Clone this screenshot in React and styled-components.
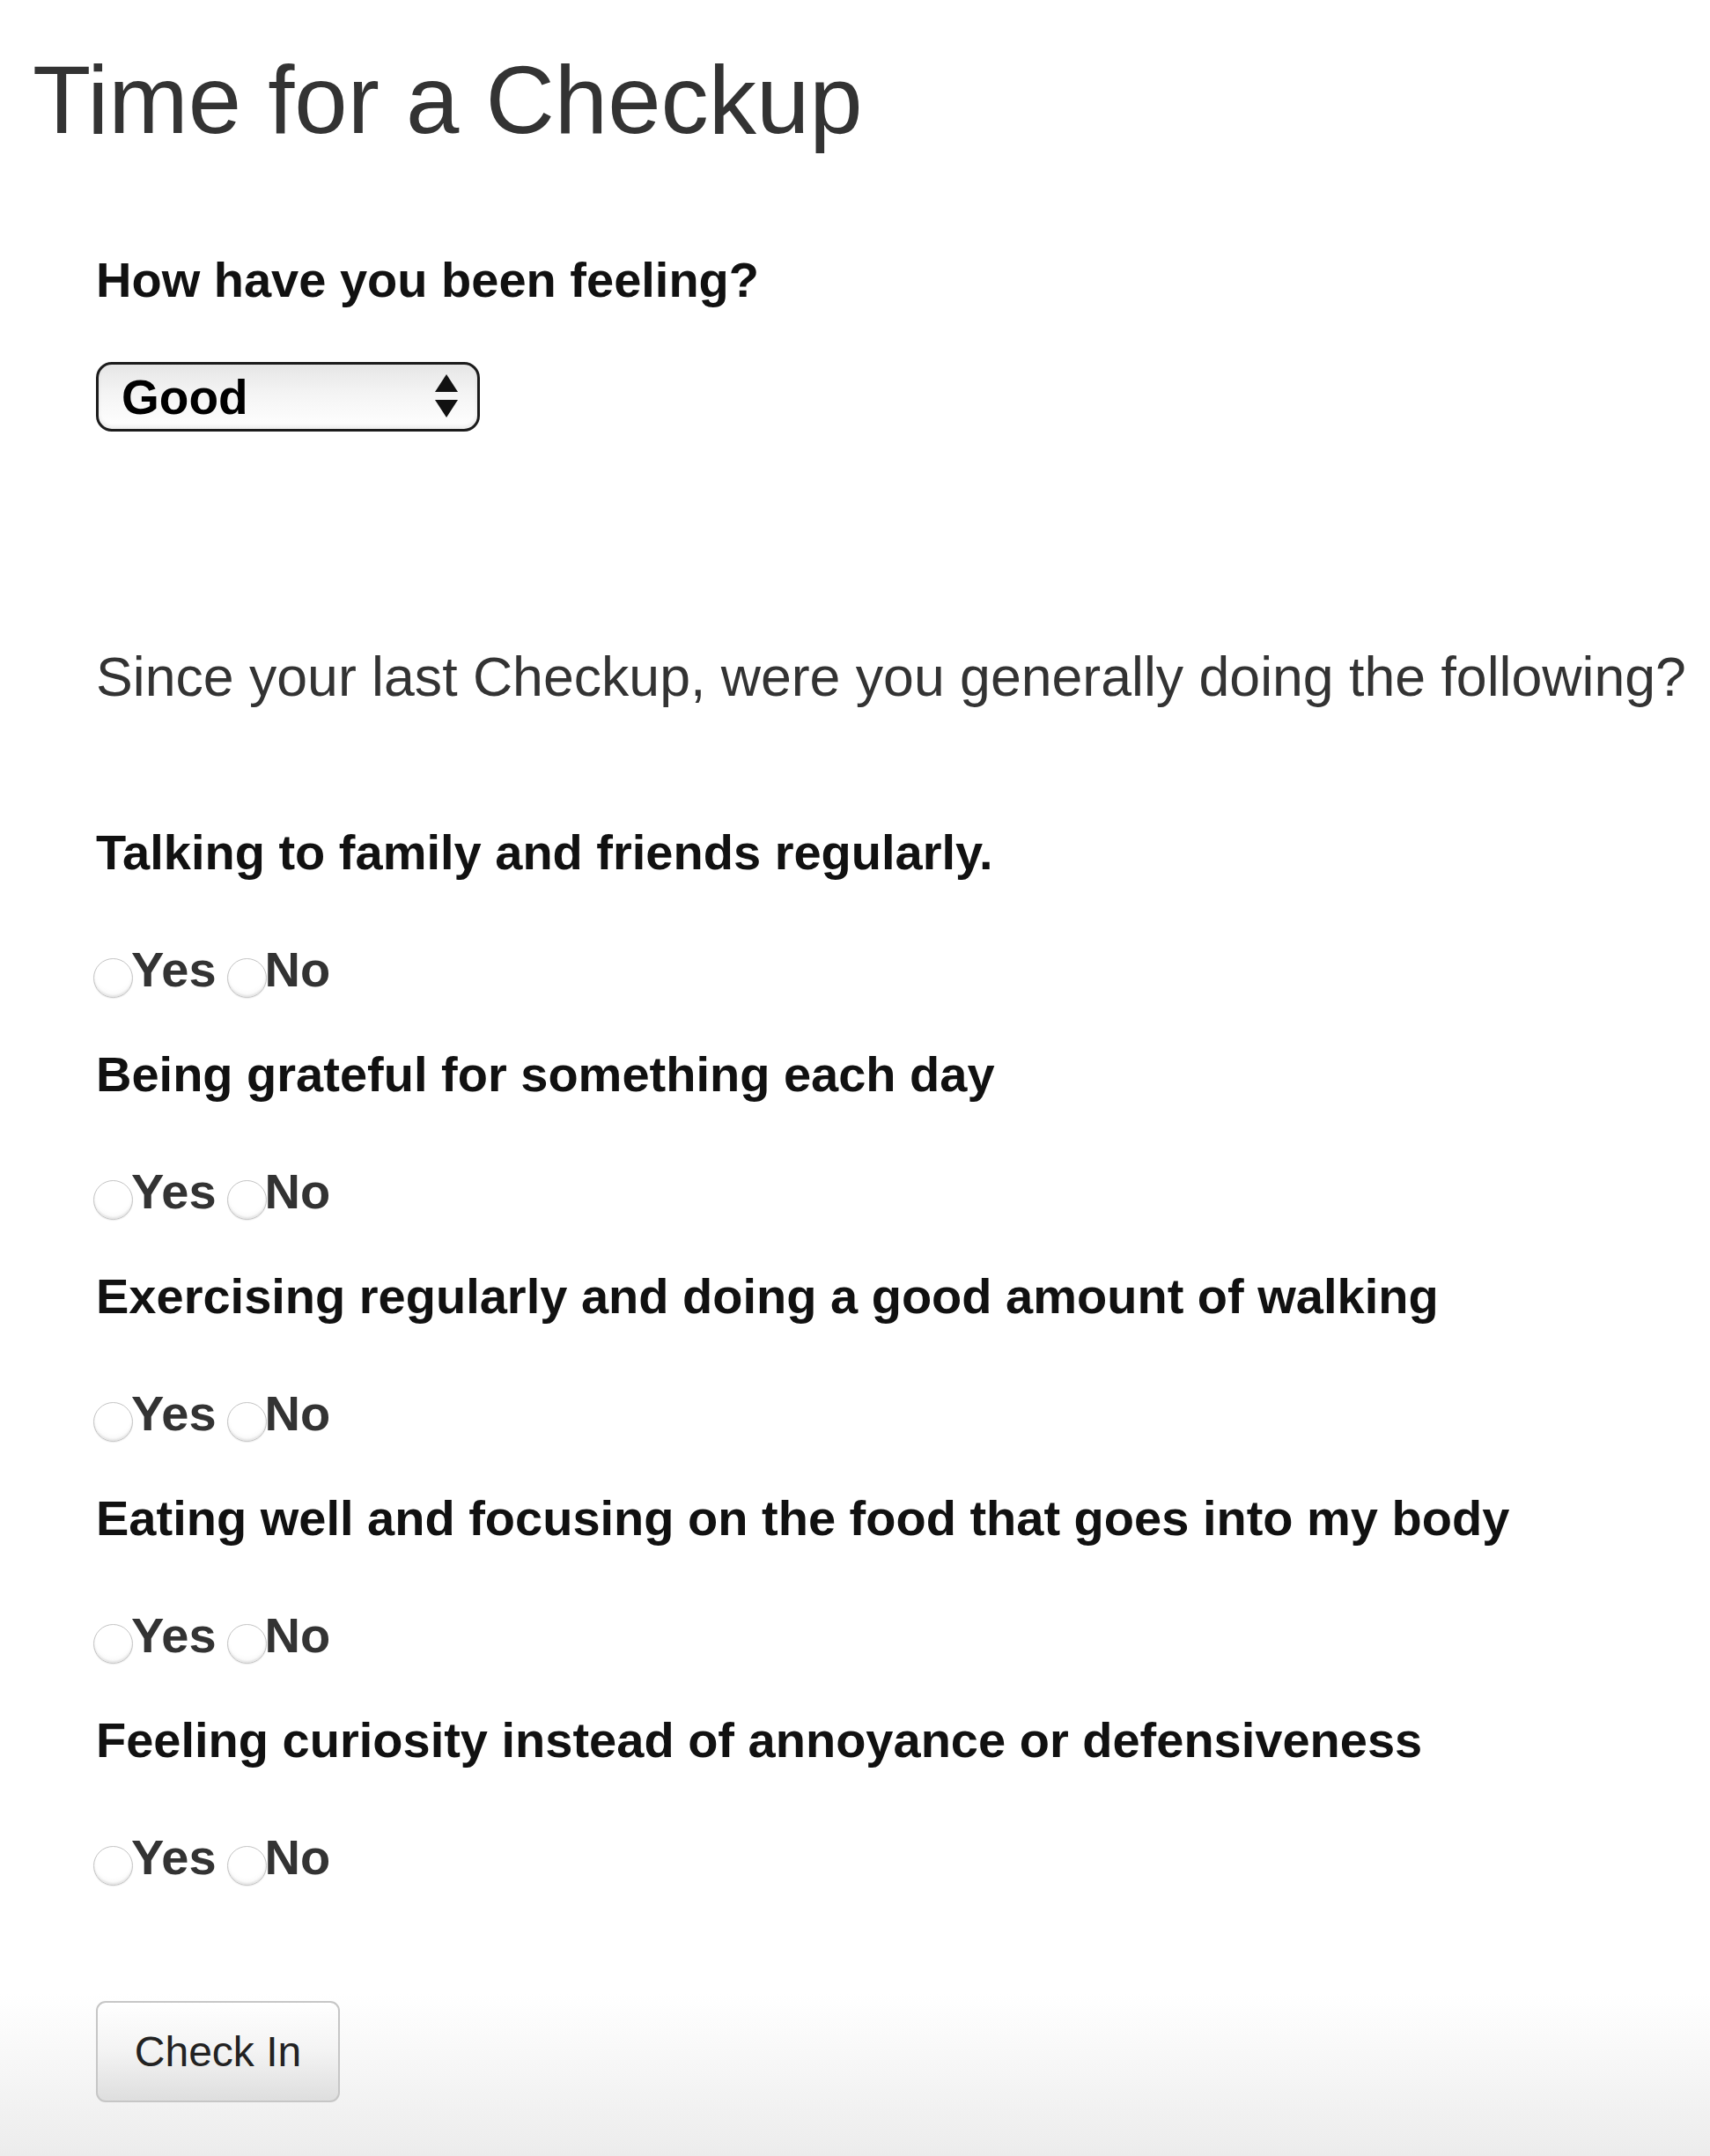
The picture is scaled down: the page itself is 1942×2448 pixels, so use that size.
import React, { useState } from "react";
import styled, { createGlobalStyle } from "styled-components";

const GlobalStyle = createGlobalStyle`
  html, body {
    margin: 0;
    padding: 0;
  }
  body {
    font-family: "Liberation Sans", Arial, Helvetica, sans-serif;
    background: #fff;
  }
`;

const Page = styled.div`
  min-height: 100vh;
  box-sizing: border-box;
  padding: 54px 0 0 37px;
  background: linear-gradient(180deg, #fff 0%, #fff 92.5%, #ececec 100%);
`;

const Title = styled.h1`
  margin: 0;
  font-size: 108.5px;
  line-height: 120px;
  font-weight: 400;
  color: #333;
`;

const Form = styled.form`
  display: flex;
  flex-direction: column;
  align-items: flex-start;
  margin-left: 72px;
`;

const Label = styled.label`
  display: block;
  margin-top: ${(p) => p.$top || 0}px;
  font-size: 56px;
  line-height: 64px;
  font-weight: 700;
  color: #111;
`;

const SelectWrap = styled.div`
  position: relative;
  margin-top: 61px;
  width: 436px;
  height: 79px;
`;

const Select = styled.select`
  appearance: none;
  -webkit-appearance: none;
  width: 100%;
  height: 100%;
  box-sizing: border-box;
  margin: 0;
  padding: 0 0 0 26px;
  border: 3px solid #1c1c1c;
  border-radius: 18px;
  background: linear-gradient(180deg, #e6e6e6 0%, #f4f4f4 45%, #fff 100%);
  box-shadow: inset 0 -3px 4px rgba(0, 0, 0, 0.08);
  font-family: inherit;
  font-size: 55px;
  font-weight: 700;
  color: #000;
  outline: none;
`;

const Arrows = styled.svg`
  position: absolute;
  right: 25px;
  top: 14px;
  pointer-events: none;
`;

const Lead = styled.h3`
  margin: 242px 0 0;
  font-size: 62.6px;
  line-height: 72px;
  font-weight: 400;
  color: #333;
`;

const QuestionBlock = styled.div`
  display: flex;
  flex-direction: column;
  align-items: flex-start;
  margin-top: ${(p) => (p.$first ? 132 : 55)}px;
`;

const RadioRow = styled.div`
  display: flex;
  align-items: flex-end;
  margin-top: 69px;
  margin-left: -3px;
`;

const Option = styled.label`
  display: flex;
  align-items: flex-end;
  margin-right: 12px;
  font-size: 56px;
  line-height: 64px;
  font-weight: 700;
  color: #333;
  cursor: pointer;
`;

const Radio = styled.input`
  appearance: none;
  -webkit-appearance: none;
  width: 45px;
  height: 45px;
  margin: 0 -2px 0 0;
  box-sizing: border-box;
  border-radius: 50%;
  border: 1.5px solid #c4c4c4;
  background: radial-gradient(circle at 50% 35%, #fff 55%, #f2f2f2 100%);
  box-shadow: inset 0 -2px 2px rgba(0, 0, 0, 0.08), 0 1px 1px rgba(0, 0, 0, 0.08);
  flex-shrink: 0;
  cursor: pointer;
  &:checked {
    background: radial-gradient(circle, #333 0 9px, #fff 10px);
  }
`;

const Button = styled.button`
  margin-top: 131px;
  width: 277px;
  height: 115px;
  box-sizing: border-box;
  border: 2.5px solid #c6c6c6;
  border-radius: 11px;
  background: linear-gradient(180deg, #fff 0%, #f3f3f3 50%, #dedede 100%);
  font-family: inherit;
  font-size: 48px;
  font-weight: 400;
  color: #222;
  padding: 0;
  cursor: pointer;
`;

const questions = [
  "Talking to family and friends regularly.",
  "Being grateful for something each day",
  "Exercising regularly and doing a good amount of walking",
  "Eating well and focusing on the food that goes into my body",
  "Feeling curiosity instead of annoyance or defensiveness",
];

export default function App() {
  const [feeling, setFeeling] = useState("Good");
  const [answers, setAnswers] = useState({});

  return (
    <Page>
      <GlobalStyle />
      <Title>Time for a Checkup</Title>
      <Form onSubmit={(e) => e.preventDefault()}>
        <Label $top={112} htmlFor="feeling">
          How have you been feeling?
        </Label>
        <SelectWrap>
          <Select
            id="feeling"
            value={feeling}
            onChange={(e) => setFeeling(e.target.value)}
          >
            <option>Great</option>
            <option>Good</option>
            <option>Okay</option>
            <option>Bad</option>
          </Select>
          <Arrows width="26" height="50" viewBox="0 0 26 50">
            <polygon points="13,0 26,20 0,20" fill="#111" />
            <polygon points="0,29 26,29 13,49" fill="#111" />
          </Arrows>
        </SelectWrap>

        <Lead>Since your last Checkup, were you generally doing the following?</Lead>

        {questions.map((q, i) => (
          <QuestionBlock key={i} $first={i === 0}>
            <Label as="div">{q}</Label>
            <RadioRow>
              {["Yes", "No"].map((opt) => (
                <Option key={opt}>
                  <Radio
                    type="radio"
                    name={`q${i}`}
                    checked={answers[i] === opt}
                    onChange={() => setAnswers({ ...answers, [i]: opt })}
                  />
                  {opt}
                </Option>
              ))}
            </RadioRow>
          </QuestionBlock>
        ))}

        <Button type="submit">Check In</Button>
      </Form>
    </Page>
  );
}
